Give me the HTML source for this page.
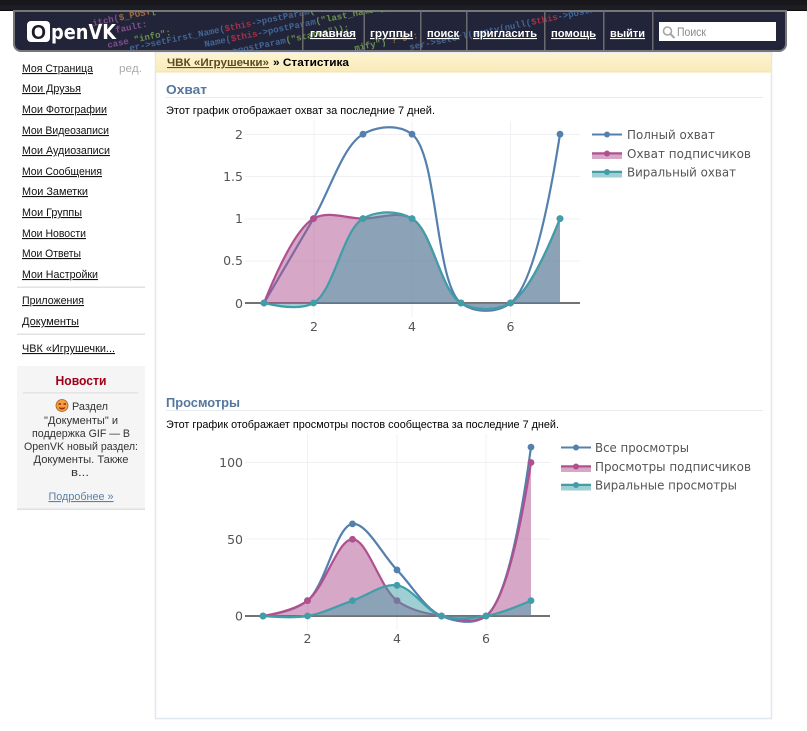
<!DOCTYPE html>
<html lang="ru"><head><meta charset="utf-8"><title>OpenVK</title>
<style>
html,body{margin:0;padding:0;background:#fff;width:807px;height:731px;overflow:hidden}
svg{display:block;filter:blur(.3px)}
text{font-family:"Liberation Sans","DejaVu Sans",sans-serif;font-size:11px;fill:#000}
.side text{fill:#111;text-decoration:underline}
.nav text{fill:#fff;font-weight:bold;text-decoration:underline}
.news text{fill:#333;text-anchor:middle}
.h{font-weight:bold;font-size:13px;fill:#55779e}
.pl text{font-family:"DejaVu Sans",sans-serif;font-size:12.5px;fill:#555}
.code text{font-family:"Liberation Mono",monospace;font-size:9px;font-weight:bold;opacity:.8}
.b{fill:#4a78ad}.r{fill:#c8344a}.g{fill:#7fae50}.p{fill:#9a58a0}.o{fill:#c87c34}
</style></head><body>
<svg xmlns="http://www.w3.org/2000/svg" width="807" height="731" viewBox="0 0 807 731">
<defs>
<clipPath id="hc"><path d="M14 11H786V44a7 7 0 0 1-7 7H21a7 7 0 0 1-7-7Z"/></clipPath>
<linearGradient id="y" x1="0" y1="0" x2="0" y2="1"><stop offset="0" stop-color="#fdf3cf"/><stop offset="1" stop-color="#f8ebba"/></linearGradient>
</defs>

<!-- top bar -->
<rect x="0" y="0" width="807" height="11" fill="#1d1d24"/>
<rect x="0" y="0" width="807" height="5" fill="#17171c"/>
<rect x="0" y="10" width="807" height="1" fill="#0c0c10"/>

<!-- content box -->
<rect x="155.5" y="52" width="616" height="666.5" fill="#fff" stroke="#e2e8f1" stroke-width="1.6"/>
<rect x="156" y="53" width="615" height="19" fill="url(#y)"/>
<rect x="156" y="71.5" width="615" height="1" fill="#f0e3ad"/>

<!-- header -->
<path d="M14 11H786V44a7 7 0 0 1-7 7H21a7 7 0 0 1-7-7Z" fill="#22243a" stroke="#77777a" stroke-width="2"/>
<g clip-path="url(#hc)" class="code">
<text x="93" y="26" transform="rotate(-11.6 93 26)"><tspan class="p">itch(</tspan><tspan class="o">$_POST</tspan><tspan class="g">[ "act</tspan></text>
<text x="116" y="33" transform="rotate(-11.6 116 33)" class="p">fault:</text>
<text x="108" y="48" transform="rotate(-11.6 108 48)"><tspan class="p">case </tspan><tspan class="g">"info":</tspan></text>
<text x="130" y="51" transform="rotate(-11.6 130 51)"><tspan class="b">er-&gt;setFirst_Name(</tspan><tspan class="r">$this</tspan><tspan class="b">-&gt;postParam</tspan><tspan class="g">("first_name"));</tspan></text>
<text x="205" y="47" transform="rotate(-11.6 205 47)"><tspan class="b">Name(</tspan><tspan class="r">$this</tspan><tspan class="b">-&gt;postParam</tspan><tspan class="g">("last_name"));</tspan></text>
<text x="228" y="55" transform="rotate(-11.6 228 55)"><tspan class="b">-&gt;postParam</tspan><tspan class="g">("status"));</tspan></text>
<text x="355" y="51" transform="rotate(-11.6 355 51)"><tspan class="g">mify") </tspan><tspan class="o">? 9 :</tspan></text>
<text x="410" y="50" transform="rotate(-11.6 410 50)"><tspan class="b">ser-&gt;setUrl(empty(null(</tspan><tspan class="r">$this</tspan><tspan class="b">-&gt;postParam</tspan></text>
</g>
<rect x="302" y="11" width="1.5" height="39" fill="#6b6b6e"/><rect x="363.5" y="11" width="1.5" height="39" fill="#6b6b6e"/>
<rect x="420" y="11" width="1.5" height="39" fill="#6b6b6e"/><rect x="466" y="11" width="1.5" height="39" fill="#6b6b6e"/>
<rect x="544" y="11" width="1.5" height="39" fill="#6b6b6e"/><rect x="603" y="11" width="1.5" height="39" fill="#6b6b6e"/>
<rect x="652" y="11" width="1.5" height="39" fill="#6b6b6e"/>

<!-- logo -->
<rect x="27" y="21" width="23" height="21" rx="4" fill="#fff"/>
<text x="31" y="39" style="font-weight:bold;font-size:20px;fill:#1b1b24" textLength="15" lengthAdjust="spacingAndGlyphs">O</text>
<text x="51" y="39" style="font-family:'DejaVu Sans',sans-serif;font-weight:bold;font-size:20px;fill:#fff" textLength="65" lengthAdjust="spacingAndGlyphs">penVK</text>

<g class="nav">
<text x="310" y="37" textLength="46" lengthAdjust="spacingAndGlyphs">главная</text>
<text x="370" y="37" textLength="43" lengthAdjust="spacingAndGlyphs">группы</text>
<text x="427" y="37" textLength="32" lengthAdjust="spacingAndGlyphs">поиск</text>
<text x="473" y="37" textLength="64" lengthAdjust="spacingAndGlyphs">пригласить</text>
<text x="551" y="37" textLength="45" lengthAdjust="spacingAndGlyphs">помощь</text>
<text x="610" y="37" textLength="35" lengthAdjust="spacingAndGlyphs">выйти</text>
</g>
<rect x="659" y="22" width="117" height="19" fill="#fff"/>
<circle cx="667.5" cy="31" r="4" fill="none" stroke="#a5a5a5" stroke-width="1.6"/>
<path d="M670.5 34L674.5 38" stroke="#a5a5a5" stroke-width="2"/>
<text x="677" y="36" style="fill:#8a8a8a;font-size:12px" textLength="29" lengthAdjust="spacingAndGlyphs">Поиск</text>

<!-- sidebar -->
<g class="side">
<text x="22" y="72" textLength="71" lengthAdjust="spacingAndGlyphs">Моя Страница</text>
<text x="22" y="92" textLength="59" lengthAdjust="spacingAndGlyphs">Мои Друзья</text>
<text x="22" y="113" textLength="85" lengthAdjust="spacingAndGlyphs">Мои Фотографии</text>
<text x="22" y="134" textLength="87" lengthAdjust="spacingAndGlyphs">Мои Видеозаписи</text>
<text x="22" y="154" textLength="88" lengthAdjust="spacingAndGlyphs">Мои Аудиозаписи</text>
<text x="22" y="175" textLength="80" lengthAdjust="spacingAndGlyphs">Мои Сообщения</text>
<text x="22" y="195" textLength="66" lengthAdjust="spacingAndGlyphs">Мои Заметки</text>
<text x="22" y="216" textLength="60" lengthAdjust="spacingAndGlyphs">Мои Группы</text>
<text x="22" y="237" textLength="64" lengthAdjust="spacingAndGlyphs">Мои Новости</text>
<text x="22" y="257" textLength="59" lengthAdjust="spacingAndGlyphs">Мои Ответы</text>
<text x="22" y="278" textLength="76" lengthAdjust="spacingAndGlyphs">Мои Настройки</text>
<text x="22" y="304" textLength="62" lengthAdjust="spacingAndGlyphs">Приложения</text>
<text x="22" y="325" textLength="57" lengthAdjust="spacingAndGlyphs">Документы</text>
<text x="22" y="352" textLength="93" lengthAdjust="spacingAndGlyphs">ЧВК «Игрушечки...</text>
</g>
<text x="119" y="72" style="fill:#aaa" textLength="23" lengthAdjust="spacingAndGlyphs">ред.</text>
<rect x="17" y="286.5" width="128" height="1.5" fill="#e2e2e2"/>
<rect x="17" y="333.5" width="128" height="1.5" fill="#e2e2e2"/>

<!-- news -->
<rect x="17" y="366" width="128" height="143" fill="#f5f5f5"/>
<rect x="17" y="508.5" width="128" height="1.5" fill="#e0e0e0"/>
<text x="81" y="385" style="font-weight:bold;font-size:13px;fill:#a00018;text-anchor:middle" textLength="51" lengthAdjust="spacingAndGlyphs">Новости</text>
<rect x="23" y="392" width="115" height="1.5" fill="#e4e4e4"/>
<circle cx="62" cy="405.5" r="6" fill="#f0a040" stroke="#a06020" stroke-width=".8"/>
<path d="M58.5 404h2.5M63.5 404h2.5" stroke="#a02010" stroke-width="1.5"/>
<path d="M59 407.5q3 3 6 0" stroke="#a02010" stroke-width="1.2" fill="#d04020"/>
<g class="news">
<text x="90" y="410" textLength="36" lengthAdjust="spacingAndGlyphs">Раздел</text>
<text x="81" y="424" textLength="74" lengthAdjust="spacingAndGlyphs">"Документы" и</text>
<text x="81" y="437" textLength="98" lengthAdjust="spacingAndGlyphs">поддержка GIF — В</text>
<text x="81" y="450" textLength="114" lengthAdjust="spacingAndGlyphs">OpenVK новый раздел:</text>
<text x="81" y="463" textLength="95" lengthAdjust="spacingAndGlyphs">Документы. Также</text>
<text x="80" y="476" textLength="18" lengthAdjust="spacingAndGlyphs">в...</text>
<text x="81" y="500" style="fill:#5a7fa8;text-decoration:underline" textLength="65" lengthAdjust="spacingAndGlyphs">Подробнее »</text>
</g>

<!-- breadcrumb -->
<text x="167" y="66" style="font-weight:bold;fill:#5b4c20;text-decoration:underline" textLength="102" lengthAdjust="spacingAndGlyphs">ЧВК «Игрушечки»</text>
<text x="273" y="66" style="font-weight:bold" textLength="76" lengthAdjust="spacingAndGlyphs">» Статистика</text>

<!-- section 1 -->
<text x="166" y="94" class="h" textLength="41" lengthAdjust="spacingAndGlyphs">Охват</text>
<rect x="166" y="97" width="597" height="1" fill="#e6e9ee"/>
<text x="166" y="114" textLength="269" lengthAdjust="spacingAndGlyphs">Этот график отображает охват за последние 7 дней.</text>

<!-- section 2 -->
<text x="166" y="407" class="h" textLength="74" lengthAdjust="spacingAndGlyphs">Просмотры</text>
<rect x="166" y="410" width="597" height="1" fill="#e6e9ee"/>
<text x="166" y="428" textLength="393" lengthAdjust="spacingAndGlyphs">Этот график отображает просмотры постов сообщества за последние 7 дней.</text>

<!-- charts grid -->
<g stroke="#eef0f3" stroke-width="1">
<path d="M245 134.5H580M245 176.5H580M245 219H580M245 261H580"/>
<path d="M314 121V317M412 121V317M510.5 121V317"/>
<path d="M245 462.5H550M245 539H550"/>
<path d="M307.5 434V630M397 434V630M486 434V630"/>
</g>
<g id="c1"></g>
<g id="c2"></g>
<g class="pl">
<text x="243" y="139" text-anchor="end">2</text>
<text x="243" y="181" text-anchor="end">1.5</text>
<text x="243" y="223" text-anchor="end">1</text>
<text x="243" y="265" text-anchor="end">0.5</text>
<text x="243" y="308" text-anchor="end">0</text>
<text x="314" y="331" text-anchor="middle">2</text>
<text x="412" y="331" text-anchor="middle">4</text>
<text x="510.5" y="331" text-anchor="middle">6</text>
<text x="243" y="467" text-anchor="end">100</text>
<text x="243" y="544" text-anchor="end">50</text>
<text x="243" y="620.5" text-anchor="end">0</text>
<text x="307.5" y="643" text-anchor="middle">2</text>
<text x="397" y="643" text-anchor="middle">4</text>
<text x="486" y="643" text-anchor="middle">6</text>
<text x="627" y="139" textLength="88" lengthAdjust="spacingAndGlyphs">Полный охват</text>
<text x="627" y="158" textLength="124" lengthAdjust="spacingAndGlyphs">Охват подписчиков</text>
<text x="627" y="176.5" textLength="109" lengthAdjust="spacingAndGlyphs">Виральный охват</text>
<text x="595" y="452" textLength="94" lengthAdjust="spacingAndGlyphs">Все просмотры</text>
<text x="595" y="471" textLength="156" lengthAdjust="spacingAndGlyphs">Просмотры подписчиков</text>
<text x="595" y="489.5" textLength="142" lengthAdjust="spacingAndGlyphs">Виральные просмотры</text>
</g>
<g id="lg"></g>
</svg>
<script>
var NS="http://www.w3.org/2000/svg";
var BL="#5580ae",PK="#b0508f",TL="#3f9ea8",PF="rgba(176,80,143,.5)",TF="rgba(63,158,168,.5)";
function el(p,n,a){var e=document.createElementNS(NS,n);for(var k in a)e.setAttribute(k,a[k]);p.appendChild(e);return e}
function tan(a,b,c){var d1x=a[0]-b[0],d1y=a[1]-b[1],d2x=c[0]-b[0],d2y=c[1]-b[1];
var d1a=Math.pow(d1x*d1x+d1y*d1y,.25),d2a=Math.pow(d2x*d2x+d2y*d2y,.25);
var nx=d2a*d2a*d1x-d1a*d1a*d2x,ny=d2a*d2a*d1y-d1a*d1a*d2y,D1=3*d2a*(d1a+d2a),D2=3*d1a*(d1a+d2a);
return [[b[0]+nx/D1,b[1]+ny/D1],[b[0]-nx/D2,b[1]-ny/D2]]}
function spline(p){var t=[],i,n=p.length;for(i=1;i<n-1;i++)t.push(tan(p[i-1],p[i],p[i+1]));
var s="M"+p[0]+"Q"+t[0][0]+" "+p[1];for(i=2;i<n-1;i++)s+="C"+t[i-2][1]+" "+t[i-1][0]+" "+p[i];
return s+"Q"+t[n-3][1]+" "+p[n-1]}
function chart(id,xs,y0,k,series,ax0,ax1){var g=document.getElementById(id);
el(g,"path",{d:"M"+ax0+" "+y0+"H"+ax1,stroke:"#444",fill:"none","stroke-width":1.4});
series.forEach(function(s){var p=s.d.map(function(v,i){return [xs[i],y0-v*k]}),d=spline(p);
if(s.f)el(g,"path",{d:d+"L"+xs[6]+" "+y0+"L"+xs[0]+" "+y0+"Z",fill:s.f});
el(g,"path",{d:d,fill:"none",stroke:s.c,"stroke-width":2.2});
p.forEach(function(q){el(g,"circle",{cx:q[0],cy:q[1],r:3.4,fill:s.c})})})}
chart("c1",[264,313.5,363,412,461,510.5,560],303,84.4,[
{d:[0,1,2,2,0,0,2],c:BL},{d:[0,1,1,1,0,0,1],c:PK,f:PF},{d:[0,0,1,1,0,0,1],c:TL,f:TF}],245,580);
chart("c2",[263,307.5,352.5,397,441.5,486,531],616,1.535,[
{d:[0,10,60,30,0,0,110],c:BL},{d:[0,10,50,10,0,0,100],c:PK,f:PF},{d:[0,0,10,20,0,0,10],c:TL,f:TF}],245,550);
var lg=document.getElementById("lg");
function leg(x,y,c,f){if(f)el(lg,"rect",{x:x,y:y-1.5,width:30,height:7,fill:f});
el(lg,"path",{d:"M"+x+" "+y+"h30",stroke:c,"stroke-width":2});el(lg,"circle",{cx:x+15,cy:y,r:3,fill:c})}
leg(592,134.5,BL);leg(592,153.5,PK,PF);leg(592,172,TL,TF);
leg(561,447.5,BL);leg(561,466.5,PK,PF);leg(561,485,TL,TF);
</script>
</body></html>
